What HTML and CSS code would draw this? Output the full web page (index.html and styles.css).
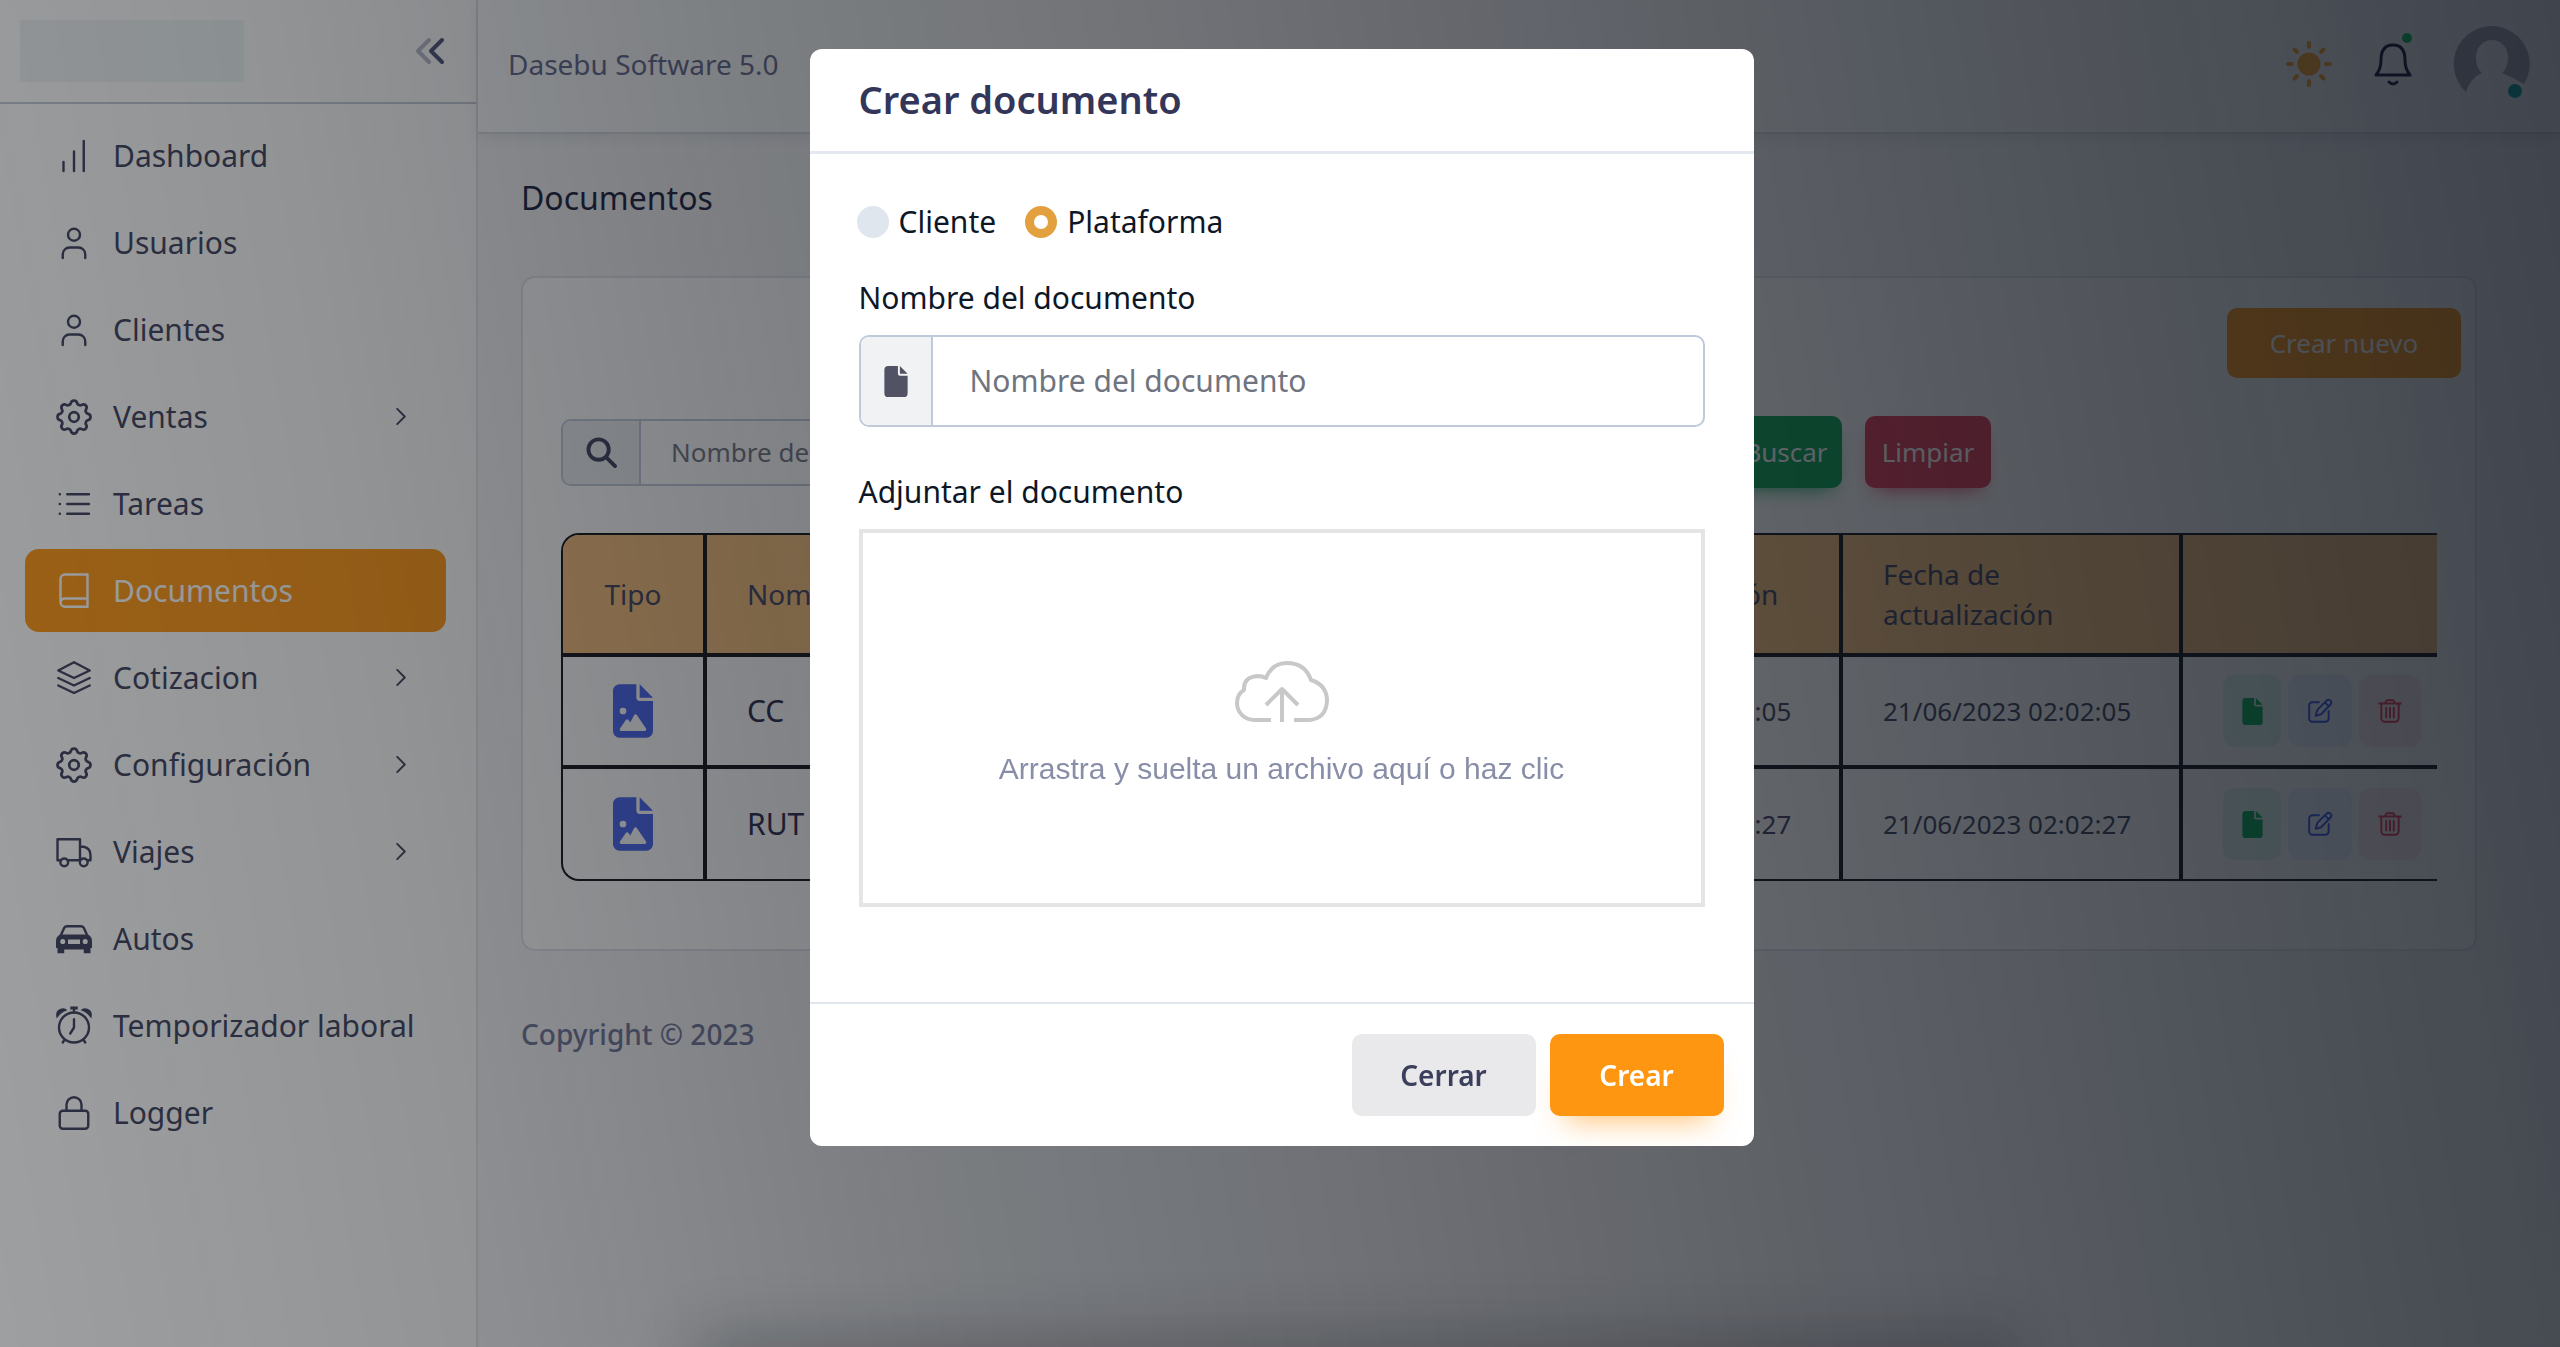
FILE: index.html
```html
<!DOCTYPE html>
<html lang="es">
<head>
<meta charset="utf-8">
<title>Dasebu Software 5.0</title>
<link rel="stylesheet" href="styles.css">
</head>
<body>
<svg class="sprite" aria-hidden="true">
  <symbol id="i-gear" viewBox="0 0 24 24"><path d="M10.325 4.317c.426-1.756 2.924-1.756 3.35 0a1.724 1.724 0 0 0 2.573 1.066c1.543-.94 3.31.826 2.37 2.37a1.724 1.724 0 0 0 1.065 2.572c1.756.426 1.756 2.924 0 3.35a1.724 1.724 0 0 0-1.066 2.573c.94 1.543-.826 3.31-2.37 2.37a1.724 1.724 0 0 0-2.572 1.065c-.426 1.756-2.924 1.756-3.35 0a1.724 1.724 0 0 0-2.573-1.066c-1.543.94-3.31-.826-2.37-2.37a1.724 1.724 0 0 0-1.065-2.572c-1.756-.426-1.756-2.924 0-3.35a1.724 1.724 0 0 0 1.066-2.573c-.94-1.543.826-3.31 2.37-2.37 1 .608 2.296.07 2.572-1.065z"/><circle cx="12" cy="12" r="2.6"/></symbol>
  <symbol id="i-user" viewBox="0 0 24 24"><circle cx="12" cy="6.500" r="4"/><path d="M4.500 22v-2.500a4.500 4.500 0 0 1 4.500-4.500h6a4.500 4.500 0 0 1 4.500 4.500V22"/></symbol>
  <symbol id="i-chevron" viewBox="0 0 10 18"><path d="M1 1l8 8-8 8"/></symbol>
  <symbol id="i-file" viewBox="0 0 24 32"><path class="solid" d="M4 0h10v8a2 2 0 0 0 2 2h8v18a4 4 0 0 1-4 4H4a4 4 0 0 1-4-4V4a4 4 0 0 1 4-4zM16 0l8 8h-8z"/></symbol>
  <symbol id="i-image" viewBox="0 0 384 512"><path class="solid" fill-rule="evenodd" d="M64 0C29 0 0 29 0 64v384c0 35 29 64 64 64h256c35 0 64-29 64-64V160H256c-18 0-32-14-32-32V0H64zm192 0v128h128L256 0zM64 256a32 32 0 1 1 64 0 32 32 0 1 1-64 0zm152 32c5 0 10 3 13 7l88 128c4 5 4 11 1 16s-8 9-14 9H80c-6 0-11-3-14-8s-3-12 1-17l56-80c3-4 8-7 13-7s10 3 13 7l17 24 37-72c3-4 8-7 13-7z"/></symbol>
  <symbol id="i-edit" viewBox="0 0 24 24"><path d="M11 4H5a3 3 0 0 0-3 3v12a3 3 0 0 0 3 3h12a3 3 0 0 0 3-3v-7"/><path d="M18 2.500a2.500 2.500 0 0 1 3.700 3.500L13 15l-5 1.500L9.500 11z M16.500 4l3.500 3.500"/></symbol>
  <symbol id="i-trash" viewBox="0 0 24 24"><path d="M2 5h20M7 5l2-3h6l2 3M4 5v14a3 3 0 0 0 3 3h10a3 3 0 0 0 3-3V5M8.500 9v9M12 9v9M15.500 9v9"/></symbol>
</svg>

<div class="app">
  <aside class="sidebar">
    <div class="brand">
      <div class="logo"></div>
      <button class="collapse" type="button" aria-label="Contraer menú"><svg viewBox="0 0 28 24"><path class="faint" d="M13 1L2 12l11 11"/><path d="M26 1L15 12l11 11"/></svg></button>
    </div>
    <nav class="menu">
      <a href="#"><svg class="ico" viewBox="0 0 24 24"><path d="M5 16v6M12 9v13M18.500 2v20"/></svg><span>Dashboard</span></a>
      <a href="#"><svg class="ico"><use href="#i-user"/></svg><span>Usuarios</span></a>
      <a href="#"><svg class="ico"><use href="#i-user"/></svg><span>Clientes</span></a>
      <a href="#"><svg class="ico gear"><use href="#i-gear"/></svg><span>Ventas</span><svg class="more"><use href="#i-chevron"/></svg></a>
      <a href="#"><svg class="ico" viewBox="0 0 24 24"><path d="M7.500 5.500H22M7.500 12H22M7.500 18.500H22M2.500 5.500h.1M2.500 12h.1M2.500 18.500h.1"/></svg><span>Tareas</span></a>
      <a href="#" class="active"><svg class="ico" viewBox="0 0 24 24"><path d="M21 1H6A3 3 0 0 0 3 4v15.500A3 3 0 0 0 6 22.500H21zM21 17H6a3 3 0 0 0-3 2.500"/></svg><span>Documentos</span></a>
      <a href="#"><svg class="ico" viewBox="0 0 24 24"><path d="M12 1.500L1.500 7 12 12l10.500-5zM1.500 12L12 17l10.500-5M1.500 17L12 22l10.500-5"/></svg><span>Cotizacion</span><svg class="more"><use href="#i-chevron"/></svg></a>
      <a href="#"><svg class="ico gear"><use href="#i-gear"/></svg><span>Configuración</span><svg class="more"><use href="#i-chevron"/></svg></a>
      <a href="#"><svg class="ico" viewBox="0 0 24 24"><path d="M3.500 17.500H1V3.500h15v14H7.500M16 8.500h2.500Q23 9.500 23 14v3.500h-2M5.500 21.500a2.600 2.600 0 1 0 0-5.200 2.600 2.600 0 0 0 0 5.200zM18.500 21.500a2.600 2.600 0 1 0 0-5.200 2.600 2.600 0 0 0 0 5.200z"/></svg><span>Viajes</span><svg class="more"><use href="#i-chevron"/></svg></a>
      <a href="#"><svg class="ico" viewBox="0 0 24 24"><path d="M3 10L5.500 4.500Q6 3.500 7.500 3.500h9q1.500 0 2 1L21 10"/><path class="solid" fill-rule="evenodd" d="M3 9h18q3 1 3 4.500V18h-1v3.500h-4.500V19h-13v2.500H1V18H0v-4.500q0-3.500 3-4.500zM4.500 12a1.700 1.700 0 1 0 0 3.400 1.700 1.700 0 0 0 0-3.400zM19.500 12a1.700 1.700 0 1 0 0 3.400 1.700 1.700 0 0 0 0-3.400zM8 12.300v3h8v-3z"/></svg><span>Autos</span></a>
      <a href="#"><svg class="ico" viewBox="0 0 24 24"><circle cx="12" cy="13" r="10"/><path d="M12 7.500V13l-2.500 4M5.500 21.500L4.500 23M18.500 21.500l1 1.500M12 0v3"/><path class="solid" d="M9.500-1h5v2h-5zM.5 7Q-1 2 3 .5q3-1 4.500 1Q3 3 .5 7zM23.500 7Q25 2 21 .5q-3-1-4.500 1Q21 3 23.500 7z"/></svg><span>Temporizador laboral</span></a>
      <a href="#"><svg class="ico" viewBox="0 0 24 24"><rect x="2.500" y="10.500" width="19" height="12" rx="2"/><path d="M7 10.500V6.500a5 5 0 0 1 10 0v4"/></svg><span>Logger</span></a>
    </nav>
  </aside>

  <div class="page">
    <header class="topbar">
      <span>Dasebu Software 5.0</span>
      <div class="tools">
        <svg class="sun" viewBox="0 0 46 46"><circle class="solid" cx="23" cy="23" r="11.500"/><path d="M23 2v4M23 40v4M2 23h4M40 23h4M8.500 8.500l2.500 2.500M35 35l2.500 2.500M8.500 37.500L11 35M35 11l2.500-2.500"/></svg>
        <div class="bell"><svg viewBox="0 0 38 44"><path d="M2 33h34q-5-6-5-15 0-15-12-15T7 18q0 9-5 15zM15 40q4 4 8 0"/></svg><i class="dot"></i></div>
        <div class="avatar"><svg viewBox="0 0 76 76"><path d="M12 66A38 38 0 1 1 70 58Q60 52 48 47 54 42 54 31a16 17 0 0 0-32 0q0 11 6 16-12 5-16 19z"/></svg><i class="dot"></i></div>
      </div>
    </header>

    <main>
      <h1>Documentos</h1>
      <section class="card">
        <div class="card-top"><button type="button" class="btn new">Crear nuevo</button></div>
        <form class="search">
          <label class="group"><span class="addon"><svg viewBox="0 0 32 32"><circle cx="13" cy="13" r="10.500"/><path d="M21 21l9 9"/></svg></span><input type="text" aria-label="Nombre del documento" placeholder="Nombre del documento"></label>
          <button type="button" class="btn find">Buscar</button>
          <button type="button" class="btn clear">Limpiar</button>
        </form>
        <div class="table-wrap">
          <table>
            <thead><tr><th class="c-type">Tipo</th><th>Nombre</th><th class="c-made">Fecha de creación</th><th class="c-upd">Fecha de actualización</th><th class="c-act"></th></tr></thead>
            <tbody>
              <tr><td class="c-type"><svg class="pic"><use href="#i-image"/></svg></td><td class="name">CC</td><td>21/06/2023 02:02:05</td><td>21/06/2023 02:02:05</td>
                <td class="c-act"><div class="acts"><button type="button" class="view" aria-label="Ver"><svg><use href="#i-file"/></svg></button><button type="button" class="edit" aria-label="Editar"><svg><use href="#i-edit"/></svg></button><button type="button" class="del" aria-label="Eliminar"><svg><use href="#i-trash"/></svg></button></div></td></tr>
              <tr><td class="c-type"><svg class="pic"><use href="#i-image"/></svg></td><td class="name">RUT</td><td>21/06/2023 02:02:27</td><td>21/06/2023 02:02:27</td>
                <td class="c-act"><div class="acts"><button type="button" class="view" aria-label="Ver"><svg><use href="#i-file"/></svg></button><button type="button" class="edit" aria-label="Editar"><svg><use href="#i-edit"/></svg></button><button type="button" class="del" aria-label="Eliminar"><svg><use href="#i-trash"/></svg></button></div></td></tr>
            </tbody>
          </table>
        </div>
      </section>
      <footer>Copyright © 2023</footer>
    </main>
  </div>
</div>

<div class="backdrop">
  <form class="modal" role="dialog" aria-labelledby="modal-title">
    <div class="modal-head"><h2 id="modal-title">Crear documento</h2></div>
    <div class="modal-body">
      <div class="radios">
        <label><input type="radio" name="owner">Cliente</label>
        <label><input type="radio" name="owner" checked>Plataforma</label>
      </div>
      <label class="caption" for="doc-name">Nombre del documento</label>
      <div class="group big"><span class="addon"><svg><use href="#i-file"/></svg></span><input id="doc-name" type="text" placeholder="Nombre del documento"></div>
      <label class="caption" for="doc-file">Adjuntar el documento</label>
      <label class="drop" for="doc-file">
        <svg viewBox="0 0 94 62"><path d="M36 59H20C9 59 2 51 2 42q0-9 7-13-1-13 14-14 4 0 8 2Q37 2 52 2q18 0 24 17 16 5 16 21Q91 57 75 59H59M47 61V29M31 44l16-16 16 16"/></svg>
        <span>Arrastra y suelta un archivo aquí o haz clic</span>
        <input id="doc-file" type="file">
      </label>
    </div>
    <div class="modal-foot">
      <button type="button" class="btn close">Cerrar</button>
      <button type="button" class="btn create">Crear</button>
    </div>
  </form>
</div>
</body>
</html>
```
FILE: styles.css
```css
* { box-sizing: border-box; }
body { margin: 0; font: 30px/40px "Noto Sans", sans-serif; color: #3b3f5c; background: #f4f5f7; }
button, input { font: inherit; color: inherit; }
button { border: 0; padding: 0; background: none; }
svg { fill: none; stroke: currentColor; stroke-linecap: round; stroke-linejoin: round; display: block; flex: none; overflow: visible; }
.solid { fill: currentColor; stroke: none; }
.sprite { position: absolute; width: 0; height: 0; }

.app { display: flex; min-height: 100vh; }
.sidebar { flex: none; width: 478px; background: #fff; border-right: 2px solid #e3e5ea; }
.brand { display: flex; justify-content: space-between; align-items: center; height: 104px; padding: 0 32px 0 20px; border-bottom: 2px solid #c3c9d6; }
.logo { width: 224px; height: 62px; background: #eff5f6; }
.collapse svg { width: 28px; height: 24px; stroke-width: 4; color: #4a5078; }
.faint { opacity: .4; }
.menu { display: flex; flex-direction: column; gap: 4px; padding: 10px 30px 10px 25px; }
.menu a { display: flex; align-items: center; height: 83px; padding: 0 40px 0 31px; gap: 21px; border-radius: 14px; color: #3b3f5c; text-decoration: none; }
.menu span { flex: 1; white-space: nowrap; }
.menu .ico { width: 36px; height: 36px; stroke-width: 1.6; }
.menu .gear { width: 44px; height: 44px; margin: 0 -4px; stroke-width: 1.5; }
.more { width: 10px; height: 17px; stroke-width: 2; }
.menu .active { background: #ff9611; color: #fff; }

.page { flex: 1; min-width: 0; }
.topbar { display: flex; justify-content: space-between; align-items: center; height: 134px; padding: 0 30px 4px; font-size: 28px; color: #60658a; background: #f9fafb; border-bottom: 2px solid #d5d8e0; box-shadow: 0 4px 14px rgba(0, 0, 0, .08); }
.tools { display: flex; align-items: center; gap: 42px; }
.sun { width: 46px; height: 46px; stroke-width: 4; color: #ffa726; }
.bell, .avatar { position: relative; }
.bell svg { width: 38px; height: 44px; stroke-width: 3; color: #14183c; }
.dot { position: absolute; width: 10px; height: 10px; border-radius: 50%; background: #00c853; top: -9px; right: 0; }
.avatar svg { width: 76px; height: 76px; stroke: none; fill: #a4a8b4; }
.avatar .dot { width: 14px; height: 14px; top: 58px; right: 8px; background: #00a99d; }

main { padding: 44px 83px 0 43px; }
h1 { margin: 0 0 58px; font-size: 32px; font-weight: 400; line-height: 40px; color: #161a3a; }
.card { padding: 30px 38px 68px; background: #fff; border: 2px solid #dfe2ea; border-radius: 14px; }
.card-top { display: flex; justify-content: flex-end; margin: 0 -24px 38px 0; }
.btn { border-radius: 10px; color: #fff; }
.new { width: 234px; height: 70px; font-size: 26px; background: #ff9611; }
.search { display: flex; align-items: center; }
.group { display: flex; height: 67px; border: 2px solid #c0cbdc; border-radius: 10px; overflow: hidden; background: #fff; }
.search .group { flex: none; width: 1131px; margin-right: 38px; font-size: 26px; }
.addon { display: flex; align-items: center; justify-content: center; flex: none; width: 78px; background: #edf1f2; border-right: 2px solid #c0cbdc; }
.addon svg { width: 31px; height: 31px; stroke-width: 4; }
.group input { flex: 1; min-width: 0; border: 0; padding: 0 30px; background: none; outline: 0; }
.group input::placeholder { color: #6f7480; opacity: 1; }
.find, .clear { height: 72px; font-size: 26px; }
.find { width: 112px; background: #00a550; box-shadow: 0 10px 20px -10px #00a550; }
.clear { width: 126px; margin-left: 23px; background: #e03550; box-shadow: 0 10px 20px -10px #e03550; }

.table-wrap { margin-top: 45px; overflow: hidden; border: 2px solid #0c0e14; border-right: 0; border-radius: 18px 0 0 18px; }
table { width: 100%; border-collapse: collapse; table-layout: fixed; font-size: 26px; }
th, td { padding: 0 0 0 40px; text-align: left; border-right: 4px solid #0c0e14; border-bottom: 4px solid #0c0e14; }
th:last-child, td:last-child { border-right: 0; }
tbody tr:last-child td { border-bottom: 0; }
th { height: 120px; padding-right: 60px; font-size: 28px; font-weight: 400; background: #f5bd78; }
td { height: 112px; }
.c-type { width: 142px; padding: 0; text-align: center; }
.c-made, .c-upd { width: 340px; }
.c-made { padding-right: 0; }
.c-act { width: 256px; }
.name { font-size: 30px; color: #23264a; }
.pic { width: 40px; height: 54px; margin: 0 auto; color: #4361ee; }
.acts { display: flex; gap: 7px; }
.acts button { display: flex; align-items: center; justify-content: center; height: 72px; border-radius: 12px; }
.acts svg { width: 26px; height: 26px; stroke-width: 1.8; }
.acts .view { width: 58px; background: #ddf5ee; color: #00ab55; }
.acts .view svg { width: 21px; height: 27px; }
.acts .edit { width: 64px; background: #eaf1ff; color: #3653ee; }
.acts .del { width: 62px; background: #fbeced; color: #e7384f; }
footer { margin-top: 63px; font-size: 28px; font-weight: 500; color: #6d7398; }

.backdrop { position: fixed; inset: 0; overflow: hidden; display: flex; align-items: flex-start; justify-content: center; padding: 49px 0;
  background: linear-gradient(80deg, rgba(24, 26, 30, .42) 0%, rgba(24, 26, 30, .47) 18%, rgba(22, 25, 31, .55) 35%, rgba(20, 23, 30, .60) 50%, rgba(18, 22, 30, .67) 67%, rgba(15, 21, 29, .725) 82%, rgba(13, 18, 29, .785) 100%); }
.backdrop::after { content: ""; position: absolute; left: 28%; right: 22%; bottom: -20px; height: 10px; box-shadow: 0 0 60px 20px rgba(20, 22, 26, .3); }
.modal { width: 944px; margin-left: 3px; background: #fff; border-radius: 12px; color: #0e1726; }
.modal-head { padding: 26px 49px 28px; border-bottom: 3px solid #e4e8f0; }
h2 { margin: 0; font-size: 38px; line-height: 48px; font-weight: 600; color: #333659; }
.modal-body { padding: 48px 49px 95px; }
.radios { display: flex; gap: 29px; margin: 0 0 36px -2px; }
.radios label { display: flex; align-items: center; gap: 10px; }
.radios input { appearance: none; width: 32px; height: 32px; margin: 0; border-radius: 50%; background: #e0e6ed; }
.radios input:checked { background: #fff; border: 9px solid #e2a03f; }
.caption { display: block; margin-bottom: 17px; }
.big { height: 92px; margin-bottom: 45px; border-color: #bfc9d9; }
.big .addon { width: 72px; background: #f1f2f3; color: #515365; border-color: #bfc9d9; }
.big .addon svg { width: 24px; height: 31px; }
.big input { padding: 0 37px; }
.drop { display: flex; flex-direction: column; align-items: center; justify-content: center; gap: 26px; height: 378px; padding-top: 14px; border: 4px solid #e5e5e5; font: 30px/40px "Liberation Sans", Arial, sans-serif; color: #888ea8; }
.drop svg { width: 94px; height: 62px; stroke-width: 4; stroke: #c8c8c8; stroke-linecap: butt; }
.drop input { position: absolute; width: 1px; height: 1px; opacity: 0; }
.modal-foot { display: flex; justify-content: flex-end; gap: 14px; padding: 30px; border-top: 2px solid #e0e6ed; }
.modal-foot .btn { height: 82px; font-size: 28px; font-weight: 600; }
.close { width: 184px; background: #e9e9eb; color: #3b3f5c; }
.create { width: 174px; background: #ff9611; box-shadow: 0 20px 30px -16px rgba(255, 150, 17, .6); }
```
